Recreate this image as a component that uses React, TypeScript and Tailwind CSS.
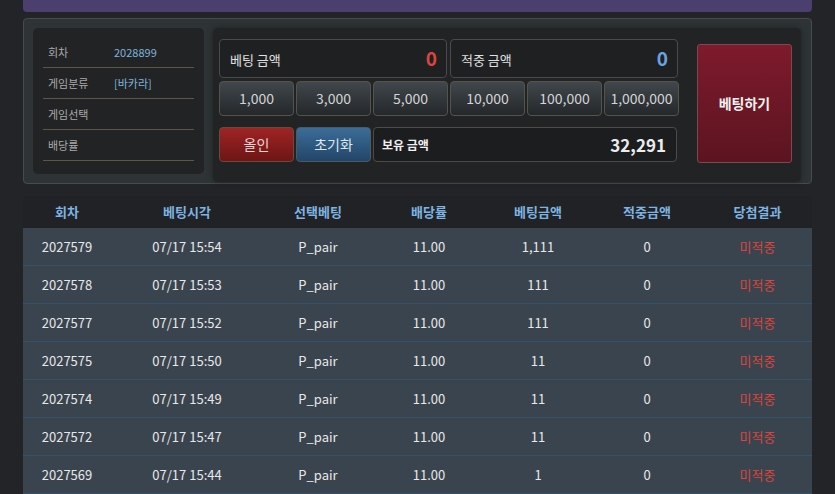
import React from "react";

const rows = [
  { no: "2027579", time: "07/17 15:54", pick: "P_pair", odds: "11.00", bet: "1,111", win: "0" },
  { no: "2027578", time: "07/17 15:53", pick: "P_pair", odds: "11.00", bet: "111", win: "0" },
  { no: "2027577", time: "07/17 15:52", pick: "P_pair", odds: "11.00", bet: "111", win: "0" },
  { no: "2027575", time: "07/17 15:50", pick: "P_pair", odds: "11.00", bet: "11", win: "0" },
  { no: "2027574", time: "07/17 15:49", pick: "P_pair", odds: "11.00", bet: "11", win: "0" },
  { no: "2027572", time: "07/17 15:47", pick: "P_pair", odds: "11.00", bet: "11", win: "0" },
  { no: "2027569", time: "07/17 15:44", pick: "P_pair", odds: "11.00", bet: "1", win: "0" },
];

const chips = ["1,000", "3,000", "5,000", "10,000", "100,000", "1,000,000"];

const cols = "grid grid-cols-[88px_152px_110px_112px_106px_112px_109px]";

export default function App() {
  return (
    <div
      className="min-h-[494px] bg-[#232427] text-[#e4e4e4]"
      style={{ fontFamily: '"Noto Sans CJK KR", "Noto Sans", sans-serif' }}
    >
      <div className="mx-auto w-[789px]">
        {/* top bar */}
        <div className="h-[12px] rounded-b-[4px] bg-[#4b3f6e]" />

        {/* bet panel */}
        <div className="mt-[6px] flex h-[166px] gap-[9px] rounded-[4px] border border-[#474c48] bg-[#2e3335] pl-[9px] pr-[9px] pt-[9px]">
          {/* info box */}
          <div className="h-[146px] w-[171px] rounded-[5px] bg-[#222325] px-[10px] pt-[9px] text-[11px]">
            {[
              ["회차", "2028899"],
              ["게임분류", "[바카라]"],
              ["게임선택", ""],
              ["배당률", ""],
            ].map(([k, v]) => (
              <div key={k} className="flex h-[31px] items-center border-b border-[#5b5646] pl-[5px]">
                <span className="w-[66px] text-[#a9a9a9]">{k}</span>
                <span className="text-[#7fb3dc]">{v}</span>
              </div>
            ))}
          </div>

          {/* bet controls */}
          <div className="flex h-[154px] w-[588px] rounded-[5px] bg-[#222325] pl-[6px] pr-[9px] pt-[11px] shadow-[0_0_6px_rgba(0,0,0,0.35)]">
            <div className="flex w-[460px] flex-col">
              <div className="flex gap-[3px]">
                <div className="flex h-[39px] w-[228px] items-center justify-between rounded-[4px] border border-[#4a4a4a] bg-[#1f2022] pl-[10px] pr-[9px]">
                  <span className="mt-[3px] text-[13px] text-[#e0e0e0]">베팅 금액</span>
                  <span className="text-[19px] font-semibold text-[#d9463f]">0</span>
                </div>
                <div className="flex h-[39px] w-[228px] items-center justify-between rounded-[4px] border border-[#4a4a4a] bg-[#1f2022] pl-[10px] pr-[9px]">
                  <span className="mt-[3px] text-[13px] text-[#e0e0e0]">적중 금액</span>
                  <span className="text-[19px] font-semibold text-[#6aa2e2]">0</span>
                </div>
              </div>

              <div className="mt-[3px] flex gap-[2px]">
                {chips.map((c) => (
                  <button
                    key={c}
                    className="h-[35px] w-[75px] rounded-[4px] border border-[#55544a] bg-gradient-to-b from-[#41474c] to-[#24282b] text-[14px] text-[#d4d4d4]"
                  >
                    {c}
                  </button>
                ))}
              </div>

              <div className="mt-[11px] flex gap-[2px]">
                <button className="h-[35px] w-[75px] rounded-[4px] border border-[#6a4a3a] bg-gradient-to-b from-[#a02424] to-[#6e1515] text-[14px] text-[#e8d8d8]">
                  올인
                </button>
                <button className="h-[35px] w-[75px] rounded-[4px] border border-[#4a5a66] bg-gradient-to-b from-[#3b6d99] to-[#234668] text-[14px] text-[#dfe6ee]">
                  초기화
                </button>
                <div className="flex h-[35px] w-[304px] items-center justify-between rounded-[4px] border border-[#4d4c44] bg-[#1c1d1f] pl-[8px] pr-[10px]">
                  <span className="text-[12px] font-bold text-[#f0f0f0]">보유 금액</span>
                  <span className="text-[17px] font-bold text-[#ececec]">32,291</span>
                </div>
              </div>
            </div>

            <button className="ml-[18px] mt-[5px] h-[119px] w-[95px] rounded-[3px] border border-[#7a4a50] bg-gradient-to-b from-[#7e1a2c] to-[#5c1420] text-[14px] font-bold text-[#f2f2f2]">
              베팅하기
            </button>
          </div>
        </div>

        {/* history table */}
        <div className="mt-[12px]">
          <div className={`${cols} h-[32px] items-center bg-[#212225] text-center text-[13px] font-bold text-[#7db4e2]`}>
            <div>회차</div>
            <div>베팅시각</div>
            <div>선택베팅</div>
            <div>배당률</div>
            <div>베팅금액</div>
            <div>적중금액</div>
            <div>당첨결과</div>
          </div>
          {rows.map((r) => (
            <div
              key={r.no}
              className={`${cols} h-[38px] items-center border-b border-[#33536b] bg-[#3a444e] text-center text-[13px] text-[#e8e8e8]`}
            >
              <div>{r.no}</div>
              <div>{r.time}</div>
              <div>{r.pick}</div>
              <div>{r.odds}</div>
              <div>{r.bet}</div>
              <div>{r.win}</div>
              <div className="text-[#d9463f]">미적중</div>
            </div>
          ))}
        </div>
      </div>
    </div>
  );
}
